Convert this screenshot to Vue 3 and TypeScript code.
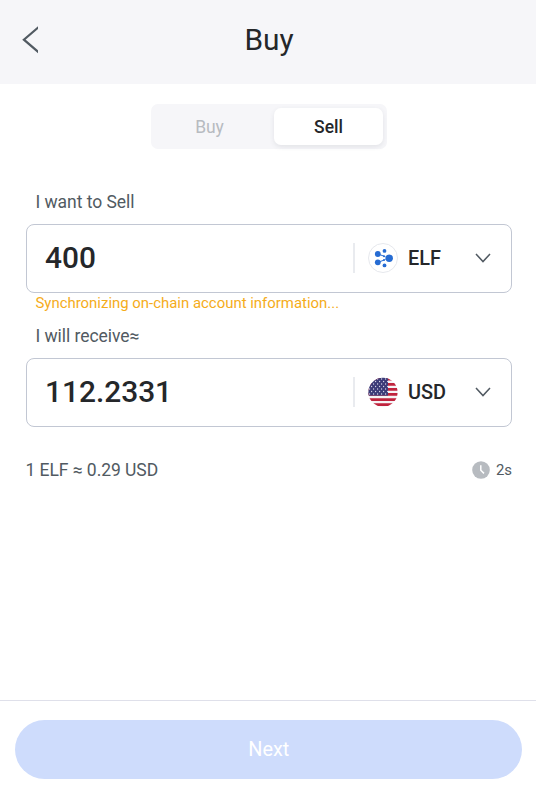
<script setup lang="ts">
import { ref } from 'vue'

type Side = 'Buy' | 'Sell'

const tabs: Side[] = ['Buy', 'Sell']
const side = ref<Side>('Sell')
const sellAmount = ref('400')
const receiveAmount = ref('112.2331')
const stars: { x: number; y: number }[] = []
for (let row = 0; row < 7; row++) {
  for (let col = 0; col < 5; col++) {
    stars.push({ x: 1.6 + col * 4 + (row % 2) * 2, y: 2 + row * 2.5 })
  }
}
</script>

<template>
  <div class="page">
    <header class="header">
      <button class="back" aria-label="Back">
        <svg width="16" height="28" viewBox="0 0 16 28"><path d="M17 .8 1.9 13.7 17 26.6" /></svg>
      </button>
      <h1>Buy</h1>
    </header>

    <main class="content">
      <div class="tabs">
        <button v-for="tab in tabs" :key="tab" class="tab" :class="{ active: tab === side }" @click="side = tab">
          {{ tab }}
        </button>
      </div>

      <section class="field">
        <div class="label">I want to Sell</div>
        <div class="box">
          <div class="amount">{{ sellAmount }}</div>
          <div class="currency">
            <svg class="coin" width="30" height="30" viewBox="0 0 30 30">
              <circle cx="15" cy="15" r="14.5" fill="#fff" stroke="#e6e8ed" />
              <g fill="#266cd3">
                <circle cx="9.8" cy="11" r="2.9" />
                <circle cx="9.8" cy="19.3" r="2.9" />
                <circle cx="16.5" cy="7.9" r="1.9" />
                <circle cx="16.5" cy="22.4" r="1.9" />
                <circle cx="21.2" cy="15.2" r="3.7" />
                <circle cx="16" cy="13.2" r="1" />
                <circle cx="16" cy="17.1" r="1" />
              </g>
              <path d="M10 11 16 13.2M10 19.3 16 17.1" fill="none" stroke="#266cd3" />
              <path d="M16 13.2 20 15.2 16 17.1" fill="none" stroke="#266cd3" stroke-width=".6" />
            </svg>
            <span class="code">ELF</span>
            <svg class="chevron" width="16" height="10" viewBox="0 0 16 10"><path d="M1 1 8 8.6 15 1" /></svg>
          </div>
        </div>
        <div class="notice">Synchronizing on-chain account information...</div>
      </section>

      <section class="field">
        <div class="label">I will receive≈</div>
        <div class="box">
          <div class="amount">{{ receiveAmount }}</div>
          <div class="currency">
            <svg class="coin" width="30" height="30" viewBox="0 0 30 30">
              <defs>
                <clipPath id="flag-disc"><circle cx="15" cy="15.3" r="14.6" /></clipPath>
              </defs>
              <g clip-path="url(#flag-disc)">
                <rect width="30" height="30" fill="#f5f3f5" />
                <path
                  d="M0 2.3H30M0 7.4H30M0 12.4H30M0 17.4H30M0 22.6H30M0 27.6H30"
                  stroke="#c0233d"
                  stroke-width="2.6"
                />
                <rect width="20" height="18.6" fill="#3c3b78" />
                <circle v-for="(star, i) in stars" :key="i" :cx="star.x" :cy="star.y" r=".65" fill="#d9d9ea" />
              </g>
            </svg>
            <span class="code">USD</span>
            <svg class="chevron" width="16" height="10" viewBox="0 0 16 10"><path d="M1 1 8 8.6 15 1" /></svg>
          </div>
        </div>
      </section>

      <div class="rate">
        <span>1 ELF ≈ 0.29 USD</span>
        <span class="timer">
          <svg width="18" height="18" viewBox="0 0 18 18">
            <circle cx="9" cy="9" r="8.8" fill="#b7bbc0" />
            <path d="M8.8 4.3V9.3L12 12.4" fill="none" stroke="#fff" stroke-width="1.5" />
          </svg>
          2s
        </span>
      </div>
    </main>

    <footer class="footer">
      <button class="next" disabled>Next</button>
    </footer>
  </div>
</template>

<style>
body {
  background: #fff;
}
</style>

<style scoped>
.page {
  display: flex;
  flex-direction: column;
  height: 792px;
  box-sizing: border-box;
  font-family: Roboto, 'Liberation Sans', sans-serif;
  color: #25272a;
  background: #fff;
}
button {
  border: 0;
  padding: 0;
  margin: 0;
  background: none;
  font-family: inherit;
  color: inherit;
}
.header {
  display: grid;
  grid-template-columns: 60px 1fr 60px;
  align-items: center;
  height: 84px;
  padding-bottom: 5px;
  box-sizing: border-box;
  background: #f6f6f9;
}
.back {
  display: flex;
  padding-left: 22px;
}
.back path {
  fill: none;
  stroke: #515a62;
  stroke-width: 2.2;
}
h1 {
  margin: 0;
  padding-left: 2px;
  text-align: center;
  font-size: 29.87px;
  line-height: 36px;
  font-weight: 400;
}
.content {
  flex: 1;
  display: flex;
  flex-direction: column;
  padding: 20px 24px 0 25.5px;
}
.tabs {
  display: grid;
  grid-template-columns: 1fr 109px;
  gap: 7px;
  width: 236px;
  height: 45px;
  margin-left: 125.5px;
  padding: 4px;
  box-sizing: border-box;
  border-radius: 7px;
  background: #f6f6f9;
}
.tab {
  border-radius: 7px;
  font-size: 17.5px;
  letter-spacing: -0.03px;
  color: #b7bbc1;
}
.tab:first-child {
  padding-right: 3px;
}
.tab.active {
  background: #fff;
  color: #25272a;
  font-weight: 500;
  box-shadow: 0 2px 5px rgba(60, 65, 80, 0.1);
}
.tabs + .field {
  margin-top: 42px;
}
.label {
  padding-left: 10px;
  height: 33px;
  line-height: 22px;
  font-size: 17.5px;
  letter-spacing: -0.05px;
  color: #515a62;
}
.box {
  display: flex;
  align-items: center;
  justify-content: space-between;
  height: 69px;
  box-sizing: border-box;
  padding: 0 20.5px 1px 18.5px;
  border: 1px solid #c2c7d3;
  border-radius: 8px;
}
.amount {
  padding-bottom: 2px;
  font-size: 29.87px;
  font-weight: 500;
}
.currency {
  display: flex;
  align-items: center;
  height: 30px;
  width: 138px;
  padding-left: 13px;
  box-sizing: border-box;
  border-left: 2px solid #e9ebef;
}
.coin {
  flex: none;
}
.code {
  flex: 1;
  padding-left: 10.5px;
  font-size: 19.9px;
  font-weight: 500;
}
.chevron path {
  fill: none;
  stroke: #515a62;
  stroke-width: 1.5;
}
.notice {
  height: 32px;
  padding-left: 10px;
  font-size: 14.93px;
  line-height: 20px;
  color: #f5ac1a;
}
.rate {
  display: flex;
  align-items: center;
  justify-content: space-between;
  margin-top: 32px;
  height: 22px;
  font-size: 17.5px;
  letter-spacing: -0.05px;
  color: #515a62;
}
.timer {
  display: flex;
  align-items: center;
  gap: 6px;
  font-size: 14.93px;
}
.footer {
  height: 92px;
  box-sizing: border-box;
  padding: 19px 13.7px 0 15.3px;
  border-top: 1px solid #dfe0ea;
}
.next {
  width: 100%;
  height: 59.3px;
  padding-bottom: 1px;
  border-radius: 30px;
  background: #cedcfc;
  color: #fff;
  font-size: 19.9px;
}
</style>
